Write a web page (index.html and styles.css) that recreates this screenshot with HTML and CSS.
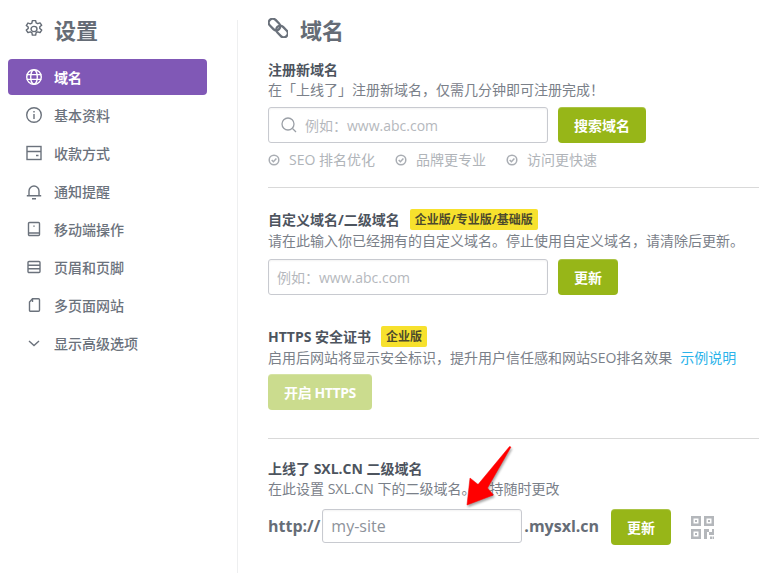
FILE: index.html
```html
<!DOCTYPE html>
<html lang="zh-CN">
<head>
<meta charset="utf-8">
<title>设置</title>
<link rel="stylesheet" href="styles.css">
</head>
<body>
<div class="page">
  <aside class="sidebar">
    <div class="side-title">
      <svg class="gear" viewBox="1.400 0.600 15.200 16.800" preserveAspectRatio="none" fill="none" stroke="#656c76" stroke-width="1.200" stroke-linejoin="round"><path d="M7.600 1.200h2.800l.4 2.100 1.300.7 2-.8 1.400 2.400-1.600 1.400v1.600l1.600 1.400-1.400 2.400-2-.8-1.300.8-.4 2.300H7.600l-.4-2.300-1.300-.8-2 .8-1.400-2.400 1.600-1.400V7.200L2.500 5.800l1.400-2.400 2 .8 1.300-.7z"/><circle cx="9" cy="9" r="2.500"/></svg>
      <span>设置</span>
    </div>
    <nav class="nav">
      <a class="nav-item active"><svg class="ico" viewBox="0 0 18 18" fill="none" stroke="#fff" stroke-width="1.400"><circle cx="9" cy="9" r="7.300"/><ellipse cx="9" cy="9" rx="3.300" ry="7.300"/><path d="M1.700 6.600h14.600M1.700 11.400h14.600"/></svg><span>域名</span></a>
      <a class="nav-item"><svg class="ico" viewBox="0 0 18 18" fill="none" stroke="#6b727c" stroke-width="1.400"><circle cx="9" cy="9" r="7.300"/><path d="M9 8v5M9 5v1.500"/></svg><span>基本资料</span></a>
      <a class="nav-item"><svg class="ico" viewBox="0 0 18 18" fill="none" stroke="#6b727c" stroke-width="1.400"><rect x="2" y="2.500" width="14" height="13"/><path d="M2 7.500h14M11 11.500h2.500"/></svg><span>收款方式</span></a>
      <a class="nav-item"><svg class="ico" viewBox="0 0 18 18" fill="none" stroke="#6b727c" stroke-width="1.400"><path d="M1.800 13.800h14.400M4 13.500V9a5 5 0 0 1 10 0v4.500M7 16.800h4"/></svg><span>通知提醒</span></a>
      <a class="nav-item"><svg class="ico" viewBox="0 0 18 18" fill="none" stroke="#6b727c" stroke-width="1.400"><rect x="3.500" y="2.500" width="11" height="13" rx="1"/><path d="M3.500 13h11M9 5.500v1.200"/></svg><span>移动端操作</span></a>
      <a class="nav-item"><svg class="ico" viewBox="0 0 18 18" fill="none" stroke="#6b727c" stroke-width="1.400"><rect x="3" y="3.500" width="12" height="11" rx="1"/><path d="M3 7.300h12M3 10.800h12"/></svg><span>页眉和页脚</span></a>
      <a class="nav-item"><svg class="ico" viewBox="0 0 18 18" fill="none" stroke="#6b727c" stroke-width="1.400"><path d="M7.500 2.800h6a1 1 0 0 1 1 1v10.500a1 1 0 0 1-1 1h-8a1 1 0 0 1-1-1V6z"/><path d="M7.500 2.800V6"/></svg><span>多页面网站</span></a>
      <a class="nav-item"><svg class="ico" viewBox="0 0 18 18" fill="none" stroke="#6b727c" stroke-width="1.400"><path d="M4 7l5 4.500L14 7"/></svg><span>显示高级选项</span></a>
    </nav>
  </aside>

  <main class="main">
    <h1 class="main-title">
      <svg class="link" viewBox="0 0 20 20" fill="none" stroke="#6a717b" stroke-width="2.300"><rect x="0" y="2.500" width="13" height="8" rx="4" transform="rotate(45 6.500 6.500)"/><rect x="7.500" y="9.500" width="13" height="8" rx="4" transform="rotate(45 14 13.500)"/></svg>
      <span>域名</span>
    </h1>

    <section class="sec sec-first">
      <h2 class="sec-head">注册新域名</h2>
      <p class="sec-desc">在「上线了」注册新域名&#xFF0C;仅需几分钟即可注册完成&#xFF01;</p>
      <div class="row">
        <div class="field field-search">
          <svg class="search" viewBox="0 0 18 18" fill="none" stroke="#9a9fa6" stroke-width="1.300"><circle cx="8" cy="8" r="6"/><path d="M12.500 12.500L16 16"/></svg>
          <span class="ph">例如&#xFF1A;www.abc.com</span>
        </div>
        <button class="btn btn-search">搜索域名</button>
      </div>
      <ul class="perks">
        <li><svg class="chk" viewBox="0 0 12 12" fill="none" stroke="#a9adb3" stroke-width="1.500"><circle cx="6" cy="6" r="4.800"/><path d="M3.700 6l1.700 1.700 3-3.200"/></svg>SEO 排名优化</li>
        <li><svg class="chk" viewBox="0 0 12 12" fill="none" stroke="#a9adb3" stroke-width="1.500"><circle cx="6" cy="6" r="4.800"/><path d="M3.700 6l1.700 1.700 3-3.200"/></svg>品牌更专业</li>
        <li><svg class="chk" viewBox="0 0 12 12" fill="none" stroke="#a9adb3" stroke-width="1.500"><circle cx="6" cy="6" r="4.800"/><path d="M3.700 6l1.700 1.700 3-3.200"/></svg>访问更快速</li>
      </ul>
    </section>

    <section class="sec sec-custom">
      <h2 class="sec-head">自定义域名/二级域名<span class="badge">企业版/专业版/基础版</span></h2>
      <p class="sec-desc">请在此输入你已经拥有的自定义域名。停止使用自定义域名&#xFF0C;请清除后更新。</p>
      <div class="row">
        <div class="field"><span class="ph">例如&#xFF1A;www.abc.com</span></div>
        <button class="btn btn-update">更新</button>
      </div>
    </section>

    <section class="sec sec-https">
      <h2 class="sec-head">HTTPS 安全证书<span class="badge">企业版</span></h2>
      <p class="sec-desc">启用后网站将显示安全标识&#xFF0C;提升用户信任感和网站SEO排名效果<a class="demo">示例说明</a></p>
      <button class="btn btn-https">开启 HTTPS</button>
    </section>

    <section class="sec sec-sxl">
      <h2 class="sec-head">上线了 SXL.CN 二级域名</h2>
      <p class="sec-desc">在此设置 SXL.CN 下的二级域名。支持随时更改</p>
      <div class="row row-sxl">
        <span class="affix">http://</span>
        <div class="field field-site"><span class="val">my-site</span></div>
        <span class="affix affix-end">.mysxl.cn</span>
        <button class="btn btn-update">更新</button>
        <svg class="qr" viewBox="0 0 23 23" fill="#b4b7bb"><path d="M0 0h10v10H0zM2.500 2.500v5h5v-5zM13 0h10v10H13zm2.500 2.500v5h5v-5zM0 13h10v10H0zm2.500 2.500v5h5v-5z" fill-rule="evenodd"/><rect x="4" y="4" width="2" height="2"/><rect x="17" y="4" width="2" height="2"/><rect x="4" y="17" width="2" height="2"/><path d="M13 13h5v3h3v-3h2v6h-5v-3h-2v7h-3zM19 20.500h2V23h-2zM21.500 20.500H23V23h-1.500z"/></svg>
      </div>
    </section>

    <svg class="arrow" viewBox="0 0 60 70"><path d="M51 7L27.500 48l6 7L7 65l3-27 8 6.500L49.500 6.500z" fill="#ff0000" stroke="#ff0000" stroke-width="0.500" stroke-linejoin="round"/></svg>
  </main>
</div>
</body>
</html>
```
FILE: styles.css
```css
* { box-sizing: border-box; }
html, body { margin: 0; padding: 0; background: #fff; }
body {
  width: 759px;
  height: 573px;
  overflow: hidden;
  font-family: "Open Sans", "Noto Sans CJK SC", sans-serif;
  color: #6b727c;
}
.page { display: flex; height: 573px; }

.sidebar { width: 238px; padding: 0 31px 0 8px; position: relative; flex: none; }
.sidebar::after {
  content: "";
  position: absolute;
  right: 0; top: 20px; bottom: 0;
  width: 1px;
  background: #eeeff0;
}
.side-title {
  height: 59px;
  display: flex;
  align-items: center;
  padding: 4px 0 6px 17px;
  font-size: 22px;
  font-weight: 700;
  color: #656c76;
}
.gear { width: 18px; height: 18px; margin-right: 11px; }
.nav { display: flex; flex-direction: column; gap: 2px; }
.nav-item {
  display: flex;
  align-items: center;
  height: 36px;
  padding-left: 17px;
  border-radius: 4px;
  font-size: 14px;
  font-weight: 500;
  color: #6b727c;
}
.nav-item .ico { width: 18px; height: 18px; margin-right: 11px; }
.nav-item.active { background: #8058b6; color: #fff; font-weight: 700; }

.main { position: relative; flex: 1; padding-left: 30px; min-width: 0; }
.main-title {
  margin: 0;
  height: 59px;
  display: flex;
  align-items: center;
  padding: 4px 0 6px;
  font-size: 22px;
  font-weight: 700;
  color: #656c76;
}
.link { width: 20px; height: 20px; margin: 0 12px 2px 0; }

.sec-head {
  margin: 0;
  font-size: 14px;
  line-height: 21px;
  font-weight: 700;
  color: #4d545e;
  display: flex;
  align-items: center;
}
.sec-desc { margin: 0; font-size: 14px; line-height: 20px; color: #7a8089; }
.row { display: flex; align-items: flex-start; margin-top: 7px; }
.field {
  width: 280px;
  height: 36px;
  border: 1px solid #c8cad0;
  border-radius: 3px;
  display: flex;
  align-items: center;
  padding-left: 8px;
  background: #fff;
  box-shadow: inset 0 1px 2px rgba(0,0,0,.05);
}
.field-search { padding-left: 11px; }
.search { width: 18px; height: 18px; margin-right: 7px; }
.ph { font-size: 14px; color: #b5b8bd; }
.btn {
  border: 0;
  margin: 0 0 0 10px;
  height: 36px;
  border-radius: 4px;
  background: #97b618;
  color: #fff;
  font: 700 14px "Open Sans", "Noto Sans CJK SC", sans-serif;
  padding: 0;
  box-shadow: inset 0 1px 0 rgba(255,255,255,.2);
}
.btn-search { width: 88px; }
.btn-update { width: 60px; }
.perks {
  list-style: none;
  margin: 7px 0 0;
  padding: 0;
  display: flex;
  gap: 20px;
  font-size: 14px;
  line-height: 20px;
  color: #b0b4b9;
}
.perks li { display: flex; align-items: center; }
.chk { width: 12px; height: 12px; margin-right: 9px; }

.sec-first { height: 129px; border-bottom: 1px solid #d9d9d9; }
.sec-custom { padding-top: 21px; height: 138px; }
.sec-custom .sec-head { margin-bottom: 1px; }
.sec-custom .row { margin-top: 8px; }
.sec-https { height: 113px; border-bottom: 1px solid #d9d9d9; }
.sec-https .sec-head { margin-bottom: 1px; }
.sec-sxl { padding-top: 19px; }

.badge {
  margin-left: 10px;
  height: 21px;
  padding: 0 5px;
  background: #f7e12d;
  border-radius: 2px;
  font-size: 12px;
  line-height: 21px;
  color: #4d4a2c;
}
.demo { margin-left: 8px; color: #2bb3ea; }
.btn-https { margin: 6px 0 0; width: 104px; background: #cbdc8e; display: block; letter-spacing: -0.4px; }

.row-sxl { margin-top: 10px; align-items: flex-start; }
.affix { font-size: 16px; font-weight: 700; line-height: 34px; color: #666d77; }
.field-site { width: 200px; height: 34px; margin-left: 2px; padding-left: 8px; }
.val { font-size: 16px; color: #8d929a; }
.affix-end { margin-left: 2px; }
.row-sxl .btn { margin-left: 12px; height: 36px; }
.qr { width: 23px; height: 23px; margin: 7px 0 0 20px; }

.arrow {
  position: absolute;
  left: 222px;
  top: 440px;
  width: 60px;
  height: 70px;
  filter: drop-shadow(1px 2px 1px rgba(0,0,0,.35));
}
```
